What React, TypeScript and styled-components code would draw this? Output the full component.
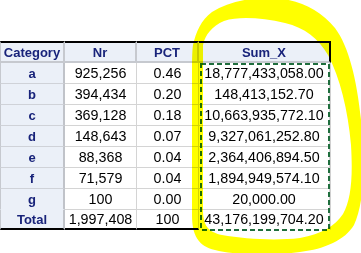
import React from "react";
import styled, { createGlobalStyle } from "styled-components";

const Global = createGlobalStyle`
  html, body { margin: 0; padding: 0; background: #ffffff; }
  body { font-family: "Liberation Sans", Arial, sans-serif; }
`;

const Page = styled.div`
  position: relative;
  width: 361px;
  height: 253px;
  overflow: hidden;
  background: #ffffff;
  padding-top: 41px;
  box-sizing: border-box;
`;

const Sheet = styled.div`
  position: relative;
  display: grid;
  grid-template-columns: 65px 72px 62px 132px;
  grid-template-rows: 22px repeat(7, 21px) 20px;
  width: 331px;
`;

const HeadCell = styled.div<{ $last?: boolean; $first?: boolean }>`
  box-sizing: border-box;
  background: #ebf0f8;
  border-top: 2px solid #000;
  border-bottom: 2px solid #c6c9cf;
  border-left: ${(p) => (p.$first ? "1px solid #c6c9cf" : "none")};
  border-right: ${(p) => (p.$last ? "2px solid #000" : "2px solid #c6c9cf")};
  display: flex;
  align-items: center;
  justify-content: center;
  font-size: 13px;
  font-weight: bold;
  color: #18237a;
`;

const RowHead = styled.div<{ $total?: boolean; $noLine?: boolean }>`
  box-sizing: border-box;
  background: #ebf0f8;
  border-left: 1px solid #c6c9cf;
  border-right: 2px solid #c0c3c9;
  border-bottom: ${(p) =>
    p.$total ? "2px solid #000" : p.$noLine ? "1px solid #ebf0f8" : "1px solid #cfd2d8"};
  display: flex;
  align-items: center;
  justify-content: center;
  font-size: 13px;
  font-weight: bold;
  color: #18237a;
`;

const Cell = styled.div<{ $total?: boolean; $sum?: boolean }>`
  box-sizing: border-box;
  background: #ffffff;
  border-right: ${(p) => (p.$sum ? "2px solid #d0d0d0" : "1px solid #d4d4d4")};
  border-bottom: ${(p) =>
    p.$total && !p.$sum ? "2px solid #000" : p.$total ? "2px solid #ffffff" : "1px solid #d4d4d4"};
  display: flex;
  align-items: center;
  justify-content: center;
  font-size: 14.3px;
  color: #000;
  white-space: nowrap;
  letter-spacing: 0;
`;

const Marquee = styled.svg`
  position: absolute;
  left: 199px;
  top: 22px;
  width: 132px;
  height: 168px;
  pointer-events: none;
`;

const Highlight = styled.svg`
  position: absolute;
  left: 0;
  top: 0;
  width: 361px;
  height: 253px;
  pointer-events: none;
  mix-blend-mode: multiply;
`;

type Row = { cat: string; nr: string; pct: string; sum: string };

const rows: Row[] = [
  { cat: "a", nr: "925,256", pct: "0.46", sum: "18,777,433,058.00" },
  { cat: "b", nr: "394,434", pct: "0.20", sum: "148,413,152.70" },
  { cat: "c", nr: "369,128", pct: "0.18", sum: "10,663,935,772.10" },
  { cat: "d", nr: "148,643", pct: "0.07", sum: "9,327,061,252.80" },
  { cat: "e", nr: "88,368", pct: "0.04", sum: "2,364,406,894.50" },
  { cat: "f", nr: "71,579", pct: "0.04", sum: "1,894,949,574.10" },
  { cat: "g", nr: "100", pct: "0.00", sum: "20,000.00" },
  { cat: "Total", nr: "1,997,408", pct: "100", sum: "43,176,199,704.20" },
];

export default function App() {
  return (
    <>
      <Global />
      <Page>
        <Sheet>
          <HeadCell $first>Category</HeadCell>
          <HeadCell>Nr</HeadCell>
          <HeadCell>PCT</HeadCell>
          <HeadCell $last>Sum_X</HeadCell>
          {rows.map((r, i) => {
            const total = i === rows.length - 1;
            return (
              <React.Fragment key={r.cat}>
                <RowHead $total={total} $noLine={r.cat === "g"}>
                  {r.cat}
                </RowHead>
                <Cell $total={total}>{r.nr}</Cell>
                <Cell $total={total}>{r.pct}</Cell>
                <Cell $total={total} $sum>
                  {r.sum}
                </Cell>
              </React.Fragment>
            );
          })}
          <Marquee viewBox="0 0 132 168">
            <rect
              x="2"
              y="1"
              width="128"
              height="166"
              fill="none"
              stroke="#1f6e3d"
              strokeWidth="2"
              strokeDasharray="5 3"
            />
          </Marquee>
        </Sheet>
        <Highlight viewBox="0 0 361 253">
          <path
            fillRule="evenodd"
            fill="#ffff00"
            d="M193,45 C196,32 201,20 212,12 C228,2 250,-3 275,-2 C300,0 320,10 335,28 C350,48 358,85 362,130 C365,175 363,205 354,225 C345,240 325,249 300,252 C270,256 235,255 215,250 C198,246 192,235 192,215 L192,80 C192,62 192,52 193,45 Z
               M203,45 C205,35 212,26 224,21 C240,16 262,18 285,23 C305,28 318,38 328,55 C340,78 348,110 351,145 C353,178 351,200 343,214 C335,226 322,234 300,238 C275,241 245,239 222,235 C208,232 203,225 203,210 L203,80 C203,62 203,52 203,45 Z"
          />
        </Highlight>
      </Page>
    </>
  );
}
